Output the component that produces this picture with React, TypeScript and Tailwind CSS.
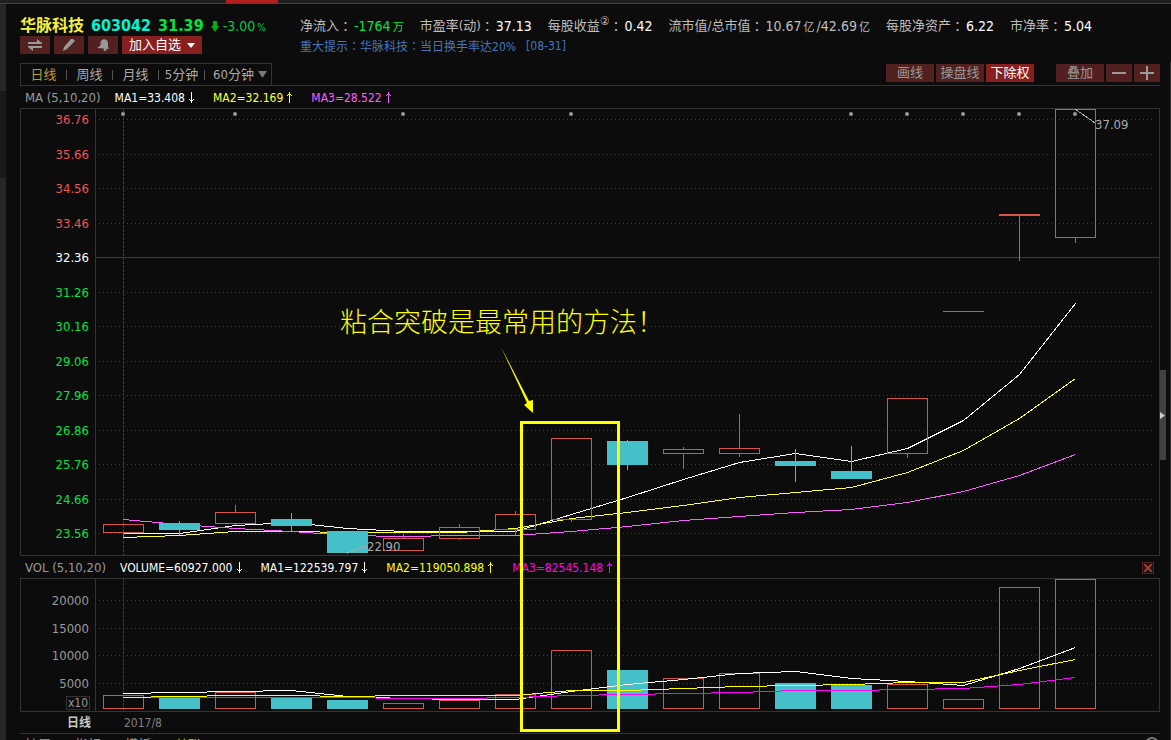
import React from 'react';

type Direction = 'up' | 'down';

interface Candle {
  top: number;
  height: number;
  high: number;
  low: number;
  falling?: boolean;
}

interface Indicator {
  text: string;
  direction: Direction;
  color: string;
}

const RED = '#d8534a';
const CYAN = '#46c0c8';
const GRID = '#3c3c3c';
const STEP = 56;
const FIRST_X = 27;
const BODY_WIDTH = 41;

const periods = ['日线', '周线', '月线', '5分钟', '60分钟'];

const priceTicks = [
  '36.76', '35.66', '34.56', '33.46', '32.36', '31.26', '30.16',
  '29.06', '27.96', '26.86', '25.76', '24.66', '23.56',
];
const priceGrid = [10, 45, 79, 114, 148, 183, 217, 252, 286, 321, 355, 390, 424];

const volumeTicks = ['20000', '15000', '10000', '5000'];
const volumeGrid = [21, 49, 76, 104];

const candles: Candle[] = [
  { top: 415, height: 9, high: 415, low: 428 },
  { top: 414, height: 7, high: 412, low: 426, falling: true },
  { top: 403, height: 12, high: 396, low: 416 },
  { top: 410, height: 7, high: 404, low: 422, falling: true },
  { top: 422, height: 22, high: 422, low: 445, falling: true },
  { top: 429, height: 13, high: 425, low: 442 },
  { top: 418, height: 12, high: 415, low: 431 },
  { top: 405, height: 16, high: 402, low: 426 },
  { top: 329, height: 82, high: 329, low: 413 },
  { top: 332, height: 24, high: 331, low: 361, falling: true },
  { top: 340, height: 5, high: 338, low: 360 },
  { top: 339, height: 6, high: 305, low: 348 },
  { top: 352, height: 5, high: 340, low: 373, falling: true },
  { top: 362, height: 8, high: 337, low: 370, falling: true },
  { top: 289, height: 56, high: 289, low: 349 },
  { top: 202, height: 1, high: 202, low: 203 },
  { top: 105, height: 2, high: 105, low: 152 },
  { top: 0, height: 129, high: 0, low: 134 },
];

const priceLines = [
  { color: '#ffffff', values: [424, 424, 416, 413, 419, 422, 422, 422, 405, 388, 370, 353, 344, 352, 339, 311, 265, 194] },
  { color: '#ffff3c', values: [428, 426, 422, 422, 423, 423, 423, 419, 409, 403, 396, 388, 383, 378, 363, 341, 309, 269] },
  { color: '#ff5cff', values: [410, 415, 419, 422, 426, 427, 426, 426, 422, 417, 411, 407, 403, 400, 393, 382, 366, 345] },
];

// top edge of every volume bar, all of them stand on VOLUME_BASE
const VOLUME_BASE = 130;
const volumeTops = [116, 119, 113, 119, 121, 124, 121, 115, 71, 91, 99, 94, 104, 106, 105, 120, 8, 0];

const volumeLines = [
  { color: '#ffffff', values: [114, 113, 112, 111, 117, 119, 120, 120, 112, 105, 100, 94, 92, 99, 102, 106, 89, 68] },
  { color: '#ff00ff', values: [118, 118, 118, 118, 118, 119, 119, 118, 116, 115, 114, 113, 111, 111, 110, 109, 105, 98] },
  { color: '#ffff00', values: [118, 117, 116, 116, 117, 116, 116, 116, 111, 111, 109, 107, 106, 105, 103, 103, 91, 80] },
];

const eventDots = [0, 2, 5, 8, 13, 14, 15, 16, 17];

const maIndicators: Indicator[] = [
  { text: 'MA1=33.408', direction: 'down', color: 'text-white' },
  { text: 'MA2=32.169', direction: 'up', color: 'text-[#ffff3c]' },
  { text: 'MA3=28.522', direction: 'up', color: 'text-[#ff5cff]' },
];

const volIndicators: Indicator[] = [
  { text: 'VOLUME=60927.000', direction: 'down', color: 'text-white' },
  { text: 'MA1=122539.797', direction: 'down', color: 'text-white' },
  { text: 'MA2=119050.898', direction: 'up', color: 'text-[#ffff00]' },
  { text: 'MA3=82545.148', direction: 'up', color: 'text-[#ff00ff]' },
];

function centerX(index: number) {
  return FIRST_X + index * STEP + 0.5;
}

function toPoints(values: number[]) {
  return values.map((value, i) => `${centerX(i)},${value + 0.5}`).join(' ');
}

function tickColor(index: number) {
  if (index < 4) return 'text-[#f2544e]';
  if (index === 4) return 'text-white';
  return 'text-[#00e446]';
}

function Colon() {
  return <span className="font-['Noto_Sans_CJK_TC',sans-serif]">：</span>;
}

function ThinArrow({ direction }: { direction: Direction }) {
  return (
    <svg width="7" height="11" viewBox="0 0 7 11" fill="none" stroke="currentColor" shapeRendering="crispEdges">
      {direction === 'up' ? (
        <path d="M3.5 0v11M2 2.5h3M1 3.5h1M5 3.5h1" />
      ) : (
        <path d="M3.5 0v11M2 8.5h3M1 7.5h1M5 7.5h1" />
      )}
    </svg>
  );
}

function IndicatorRow({ title, items, children }: { title: string; items: Indicator[]; children?: React.ReactNode }) {
  return (
    <div className="flex h-[22px] items-center gap-[14px] pt-px pl-[5px] text-[12px] leading-4 whitespace-nowrap">
      <span className="text-[13px] text-[#999]">{title}</span>
      <div className="flex gap-[18px]">
        {items.map((item) => (
          <span key={item.text} className={`flex items-center gap-[3px] ${item.color}`}>
            {item.text}
            <ThinArrow direction={item.direction} />
          </span>
        ))}
      </div>
      {children}
    </div>
  );
}

function Metric({ label, children }: { label: React.ReactNode; children: React.ReactNode }) {
  return (
    <div className="flex items-center">
      <dt className="flex text-[13px] text-[#bdbdbd]">
        {label}
        <Colon />
      </dt>
      <dd className="pl-[2px] text-[14px] text-white">{children}</dd>
    </div>
  );
}

function Grid({ rows, solidRow }: { rows: number[]; solidRow?: number }) {
  return (
    <g stroke={GRID}>
      {rows.map((y, i) =>
        i === solidRow ? (
          <line key={y} x1="0" x2="100%" y1={y + 0.5} y2={y + 0.5} />
        ) : (
          <line key={y} x1="3" x2="99.6%" y1={y + 0.5} y2={y + 0.5} strokeDasharray="1 3" />
        )
      )}
      <line x1={FIRST_X + 0.5} x2={FIRST_X + 0.5} y1="0" y2="100%" strokeDasharray="3 1" />
    </g>
  );
}

function Bar({ index, top, height, falling }: { index: number; top: number; height: number; falling?: boolean }) {
  const x = 7 + index * STEP;
  if (falling) return <rect x={x} y={top} width={BODY_WIDTH} height={height} fill={CYAN} />;
  if (height < 3) return <rect x={x} y={top} width={BODY_WIDTH} height={height} fill={RED} />;
  return <rect x={x + 0.5} y={top + 0.5} width={BODY_WIDTH - 1} height={height - 1} fill="none" stroke={RED} />;
}

function PriceChart() {
  return (
    <svg className="h-[446px] min-w-0 flex-1 text-[13px]" shapeRendering="crispEdges">
      <Grid rows={priceGrid} solidRow={4} />
      {priceLines.map((line) => (
        <polyline key={line.color} points={toPoints(line.values)} fill="none" stroke={line.color} />
      ))}
      {candles.map((candle, i) => {
        const x = centerX(i);
        const bottom = candle.top + candle.height;
        return (
          <g key={i} stroke={candle.falling ? CYAN : RED}>
            {candle.high < candle.top && <line x1={x} x2={x} y1={candle.high} y2={candle.top} />}
            {candle.low > bottom && <line x1={x} x2={x} y1={bottom} y2={candle.low} />}
            <g stroke="none">
              <Bar index={i} top={candle.top} height={candle.height} falling={candle.falling} />
            </g>
          </g>
        );
      })}
      {eventDots.map((i) => (
        <circle key={i} cx={centerX(i) - 0.5} cy="5" r="2" fill="#999" shapeRendering="auto" />
      ))}
      <g stroke="#aaa" fill="none">
        <line x1="979" y1="0" x2="999" y2="14" />
        <line x1="251" y1="444" x2="271" y2="437" />
      </g>
      <text x="999" y="20" fill="#aaa">37.09</text>
      <text x="271" y="442" fill="#aaa">22.90</text>
    </svg>
  );
}

function VolumeChart() {
  return (
    <svg className="h-[132px] min-w-0 flex-1" shapeRendering="crispEdges">
      <Grid rows={volumeGrid} />
      {volumeTops.map((top, i) => (
        <Bar key={i} index={i} top={top} height={VOLUME_BASE - top} falling={candles[i].falling} />
      ))}
      {volumeLines.map((line) => (
        <polyline key={line.color} points={toPoints(line.values)} fill="none" stroke={line.color} />
      ))}
    </svg>
  );
}

const darkButton = 'flex h-[18px] items-center justify-center bg-[#51201f] text-[13px] leading-[18px] text-[#999]';

function StockHeader() {
  return (
    <header className="flex pt-3 whitespace-nowrap">
      <div className="w-[280px] shrink-0">
        <div className="flex h-5 items-center gap-[7px] text-[16px] font-bold">
          <h1 className="text-[#f4f03c]">华脉科技</h1>
          <span className="text-[#00f5d4]">603042</span>
          <span className="text-[#00e446]">31.39</span>
          <span className="flex items-center gap-1 text-[14px] font-normal text-[#00c846]">
            <svg width="8" height="11" viewBox="0 0 8 11" fill="#0caa0c">
              <path d="M2 0h4v5h2L4 11 0 5h2z" />
            </svg>
            <span>
              -3.00<span className="pl-[2px] text-[10px]">%</span>
            </span>
          </span>
        </div>
        <div className="flex gap-1">
          <button type="button" aria-label="切换" className={`${darkButton} w-[30px]`}>
            <svg width="14" height="12" viewBox="0 0 14 12" fill="#999">
              <path d="M0 3h9V0l5 4v1H0zM14 9H5v3L0 8V7h14z" />
            </svg>
          </button>
          <button type="button" aria-label="备注" className={`${darkButton} w-[30px]`}>
            <svg width="12" height="12" viewBox="0 0 12 12" fill="#999">
              <path d="M0 12l1-4 7-8h2l2 2-8 8z" />
            </svg>
          </button>
          <button type="button" aria-label="预警" className={`${darkButton} w-[30px]`}>
            <svg width="13" height="12" viewBox="0 0 13 12" fill="#999">
              <path d="M4 2c2-3 7-2 7 2v4l1 2-12-1 3-2c1-2 0-3 1-5z" />
              <circle cx="8" cy="10.500" r="1.500" />
            </svg>
          </button>
          <button type="button" className="flex h-[18px] w-20 items-center justify-center gap-[6px] bg-[#87201e] text-[13px] leading-[18px] text-white">
            加入自选
            <svg width="8" height="5" viewBox="0 0 8 5" fill="#fff">
              <path d="M0 0h8L4 5z" />
            </svg>
          </button>
        </div>
      </div>
      <div>
        <dl className="flex h-5 items-center gap-4">
          <Metric label="净流入">
            <span className="text-[#00e446]">
              -1764<span className="pl-[2px] text-[11px]">万</span>
            </span>
          </Metric>
          <Metric label="市盈率(动)">37.13</Metric>
          <Metric label={<>每股收益<span className="relative -top-1 text-[12px]">②</span></>}>0.42</Metric>
          <Metric label="流市值/总市值">
            <span className="text-[#bdbdbd]">
              10.67<span className="px-[2px] text-[11px]">亿</span>/42.69<span className="pl-[2px] text-[11px]">亿</span>
            </span>
          </Metric>
          <Metric label="每股净资产">6.22</Metric>
          <Metric label="市净率">5.04</Metric>
        </dl>
        <p className="flex h-5 items-center text-[12px] text-[#4a74b8]">
          <a href="#notice">
            重大提示<Colon />华脉科技<Colon />当日换手率达20%
          </a>
          <span className="pl-[10px]">[08-31]</span>
        </p>
      </div>
    </header>
  );
}

function Toolbar() {
  return (
    <div className="mt-[7px] flex h-[23px] items-start justify-between border-b border-[#333] whitespace-nowrap">
      <nav className="flex h-[22px] items-center border-x border-t border-[#333] pr-1 text-[13px] leading-5">
        {periods.map((period, i) => (
          <React.Fragment key={period}>
            {i > 0 && <span className="h-[10px] w-px bg-[#555]" />}
            <button
              type="button"
              className={`${i === 0 ? 'text-[#b89b3a]' : 'text-[#aaa]'} ${i === periods.length - 1 ? 'pl-2' : 'w-[45px]'}`}
            >
              {period}
            </button>
          </React.Fragment>
        ))}
        <svg className="ml-1" width="9" height="7" viewBox="0 0 9 7" fill="#777">
          <path d="M0 0h9L4.500 7z" />
        </svg>
      </nav>
      <div className="flex gap-[2px] pt-px">
        <button type="button" className={`${darkButton} w-12`}>画线</button>
        <button type="button" className={`${darkButton} w-12`}>操盘线</button>
        <button type="button" className="h-[18px] w-12 bg-[#87201e] text-[13px] leading-[18px] text-white">下除权</button>
        <button type="button" className={`${darkButton} ml-5 w-12`}>叠加</button>
        <button type="button" aria-label="缩小" className={`${darkButton} w-[26px]`}>
          <svg width="14" height="14" fill="#999"><rect y="6" width="14" height="2" /></svg>
        </button>
        <button type="button" aria-label="放大" className={`${darkButton} w-[26px]`}>
          <svg width="14" height="14" fill="#999"><path d="M6 0h2v6h6v2H8v6H6V8H0V6h6z" /></svg>
        </button>
      </div>
    </div>
  );
}

function Annotation() {
  return (
    <>
      <p className="absolute top-[215px] left-[320px] text-[27px] leading-10 font-light whitespace-nowrap text-[#ffff00] font-['Noto_Sans_CJK_SC',sans-serif]">
        粘合突破是最常用的方法！
      </p>
      <svg className="absolute top-[261px] left-[480px]" width="36" height="68" viewBox="0 0 36 68" fill="#ffff00">
        <path d="M1 0L29 54l4-1v13L24 58l3-2z" />
      </svg>
      <div className="absolute top-[335px] left-[500px] h-[311px] w-[100px] border-3 border-[#ffff00]" />
    </>
  );
}

export default function App() {
  return (
    <div className="flex h-screen flex-col overflow-hidden bg-[#0c0c0c] font-['DejaVu_Sans_Condensed','Noto_Sans_CJK_SC',sans-serif]">
      <div className="h-1 shrink-0 border-b border-[#a01c1c] bg-[#1e1e1e]">
        <div className="ml-[226px] h-[3px] w-[52px] bg-[#b01e1e]" />
      </div>
      <div className="flex min-h-0 flex-1">
        <aside className="flex w-[6px] shrink-0 flex-col bg-[#262626]">
          <div className="mt-[87px] h-[87px] bg-[#191919]" />
        </aside>
        <main className="min-w-0 flex-1 pl-[14px]">
          <StockHeader />
          <Toolbar />
          <section className="relative">
            <IndicatorRow title="MA (5,10,20)" items={maIndicators} />
            <div className="flex border border-[#333]">
              <ol className="flex w-[75px] shrink-0 flex-col justify-between border-r border-[#333] pt-[3px] pr-[6px] pb-[13px] text-right text-[13px] leading-4">
                {priceTicks.map((tick, i) => (
                  <li key={tick} className={tickColor(i)}>{tick}</li>
                ))}
              </ol>
              <PriceChart />
            </div>
            <IndicatorRow title="VOL (5,10,20)" items={volIndicators}>
              <button type="button" aria-label="关闭" className="mr-[6px] ml-auto flex size-3 items-center justify-center border border-[#51201f] bg-[#1a1616]">
                <svg width="8" height="8" viewBox="0 0 8 8" stroke="#a03c36" strokeWidth="2">
                  <path d="M0 0l8 8M8 0L0 8" />
                </svg>
              </button>
            </IndicatorRow>
            <div className="flex border border-[#333]">
              <div className="flex w-[75px] shrink-0 flex-col items-end border-r border-[#333] pt-[14px] pr-[5px] text-[#999]">
                <ol className="flex h-[99px] flex-col justify-between pr-px text-right text-[13px] leading-4">
                  {volumeTicks.map((tick) => (
                    <li key={tick}>{tick}</li>
                  ))}
                </ol>
                <span className="mt-1 border border-[#333] px-px text-[12px] leading-3">x10</span>
              </div>
              <VolumeChart />
            </div>
            <div className="flex h-[21px] items-center text-[12px]">
              <span className="w-[75px] pr-[4px] text-right font-bold text-[#c8c8c8]">日线</span>
              <span className="pl-[29px] text-[#808080]">2017/8</span>
            </div>
            <Annotation />
          </section>
          <footer className="flex gap-6 border-t border-[#333] pt-[3px] pl-[5px] text-[13px] leading-4 text-[#999]">
            <span>扩展</span>
            <span>指标</span>
            <span>模板</span>
            <span className="text-[#b89b3a]">关联</span>
            <svg className="mr-px ml-auto" width="14" height="14" viewBox="0 0 14 14" fill="none" stroke="#777" strokeWidth="2">
              <circle cx="7" cy="7" r="6" />
            </svg>
          </footer>
        </main>
        <div className="flex w-[11px] shrink-0 flex-col">
          <div className="mt-[58px] flex-1 border-r border-[#333]">
            <button type="button" aria-label="展开" className="mt-[308px] flex h-[90px] w-[6px] items-center bg-[#414141]">
              <svg width="5" height="7" viewBox="0 0 5 7" fill="#ccc">
                <path d="M0 0l5 3.500L0 7z" />
              </svg>
            </button>
          </div>
        </div>
      </div>
    </div>
  );
}
